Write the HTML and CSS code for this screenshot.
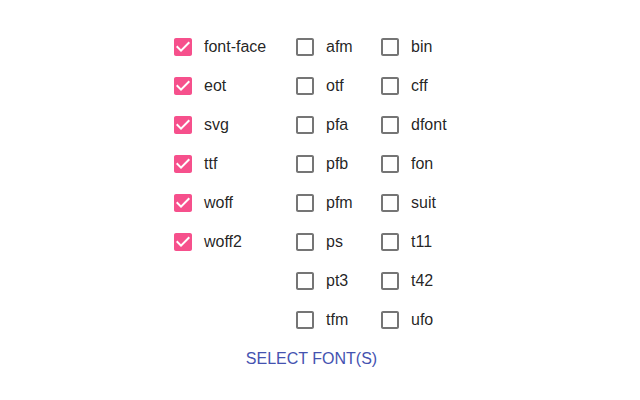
FILE: index.html
```html
<!DOCTYPE html>
<html>
<head>
<meta charset="utf-8">
<link rel="stylesheet" href="styles.css">
</head>
<body>
<div class="page">
  <div class="group">
    <div class="col c1">
      <label class="item"><span class="cb on"><svg viewBox="0 0 24 24"><path d="M19 3H5c-1.11 0-2 .9-2 2v14c0 1.1.89 2 2 2h14c1.11 0 2-.9 2-2V5c0-1.1-.89-2-2-2zm-9 14l-5-5 1.41-1.41L10 14.17l7.59-7.59L19 8l-9 9z"/></svg></span><span class="lbl">font-face</span></label>
      <label class="item"><span class="cb on"><svg viewBox="0 0 24 24"><path d="M19 3H5c-1.11 0-2 .9-2 2v14c0 1.1.89 2 2 2h14c1.11 0 2-.9 2-2V5c0-1.1-.89-2-2-2zm-9 14l-5-5 1.41-1.41L10 14.17l7.59-7.59L19 8l-9 9z"/></svg></span><span class="lbl">eot</span></label>
      <label class="item"><span class="cb on"><svg viewBox="0 0 24 24"><path d="M19 3H5c-1.11 0-2 .9-2 2v14c0 1.1.89 2 2 2h14c1.11 0 2-.9 2-2V5c0-1.1-.89-2-2-2zm-9 14l-5-5 1.41-1.41L10 14.17l7.59-7.59L19 8l-9 9z"/></svg></span><span class="lbl">svg</span></label>
      <label class="item"><span class="cb on"><svg viewBox="0 0 24 24"><path d="M19 3H5c-1.11 0-2 .9-2 2v14c0 1.1.89 2 2 2h14c1.11 0 2-.9 2-2V5c0-1.1-.89-2-2-2zm-9 14l-5-5 1.41-1.41L10 14.17l7.59-7.59L19 8l-9 9z"/></svg></span><span class="lbl">ttf</span></label>
      <label class="item"><span class="cb on"><svg viewBox="0 0 24 24"><path d="M19 3H5c-1.11 0-2 .9-2 2v14c0 1.1.89 2 2 2h14c1.11 0 2-.9 2-2V5c0-1.1-.89-2-2-2zm-9 14l-5-5 1.41-1.41L10 14.17l7.59-7.59L19 8l-9 9z"/></svg></span><span class="lbl">woff</span></label>
      <label class="item"><span class="cb on"><svg viewBox="0 0 24 24"><path d="M19 3H5c-1.11 0-2 .9-2 2v14c0 1.1.89 2 2 2h14c1.11 0 2-.9 2-2V5c0-1.1-.89-2-2-2zm-9 14l-5-5 1.41-1.41L10 14.17l7.59-7.59L19 8l-9 9z"/></svg></span><span class="lbl">woff2</span></label>
    </div>
    <div class="col c2">
      <label class="item"><span class="cb"><svg viewBox="0 0 24 24"><path d="M19 5v14H5V5h14m0-2H5c-1.1 0-2 .9-2 2v14c0 1.1.9 2 2 2h14c1.1 0 2-.9 2-2V5c0-1.1-.9-2-2-2z"/></svg></span><span class="lbl">afm</span></label>
      <label class="item"><span class="cb"><svg viewBox="0 0 24 24"><path d="M19 5v14H5V5h14m0-2H5c-1.1 0-2 .9-2 2v14c0 1.1.9 2 2 2h14c1.1 0 2-.9 2-2V5c0-1.1-.9-2-2-2z"/></svg></span><span class="lbl">otf</span></label>
      <label class="item"><span class="cb"><svg viewBox="0 0 24 24"><path d="M19 5v14H5V5h14m0-2H5c-1.1 0-2 .9-2 2v14c0 1.1.9 2 2 2h14c1.1 0 2-.9 2-2V5c0-1.1-.9-2-2-2z"/></svg></span><span class="lbl">pfa</span></label>
      <label class="item"><span class="cb"><svg viewBox="0 0 24 24"><path d="M19 5v14H5V5h14m0-2H5c-1.1 0-2 .9-2 2v14c0 1.1.9 2 2 2h14c1.1 0 2-.9 2-2V5c0-1.1-.9-2-2-2z"/></svg></span><span class="lbl">pfb</span></label>
      <label class="item"><span class="cb"><svg viewBox="0 0 24 24"><path d="M19 5v14H5V5h14m0-2H5c-1.1 0-2 .9-2 2v14c0 1.1.9 2 2 2h14c1.1 0 2-.9 2-2V5c0-1.1-.9-2-2-2z"/></svg></span><span class="lbl">pfm</span></label>
      <label class="item"><span class="cb"><svg viewBox="0 0 24 24"><path d="M19 5v14H5V5h14m0-2H5c-1.1 0-2 .9-2 2v14c0 1.1.9 2 2 2h14c1.1 0 2-.9 2-2V5c0-1.1-.9-2-2-2z"/></svg></span><span class="lbl">ps</span></label>
      <label class="item"><span class="cb"><svg viewBox="0 0 24 24"><path d="M19 5v14H5V5h14m0-2H5c-1.1 0-2 .9-2 2v14c0 1.1.9 2 2 2h14c1.1 0 2-.9 2-2V5c0-1.1-.9-2-2-2z"/></svg></span><span class="lbl">pt3</span></label>
      <label class="item"><span class="cb"><svg viewBox="0 0 24 24"><path d="M19 5v14H5V5h14m0-2H5c-1.1 0-2 .9-2 2v14c0 1.1.9 2 2 2h14c1.1 0 2-.9 2-2V5c0-1.1-.9-2-2-2z"/></svg></span><span class="lbl">tfm</span></label>
    </div>
    <div class="col c3">
      <label class="item"><span class="cb"><svg viewBox="0 0 24 24"><path d="M19 5v14H5V5h14m0-2H5c-1.1 0-2 .9-2 2v14c0 1.1.9 2 2 2h14c1.1 0 2-.9 2-2V5c0-1.1-.9-2-2-2z"/></svg></span><span class="lbl">bin</span></label>
      <label class="item"><span class="cb"><svg viewBox="0 0 24 24"><path d="M19 5v14H5V5h14m0-2H5c-1.1 0-2 .9-2 2v14c0 1.1.9 2 2 2h14c1.1 0 2-.9 2-2V5c0-1.1-.9-2-2-2z"/></svg></span><span class="lbl">cff</span></label>
      <label class="item"><span class="cb"><svg viewBox="0 0 24 24"><path d="M19 5v14H5V5h14m0-2H5c-1.1 0-2 .9-2 2v14c0 1.1.9 2 2 2h14c1.1 0 2-.9 2-2V5c0-1.1-.9-2-2-2z"/></svg></span><span class="lbl">dfont</span></label>
      <label class="item"><span class="cb"><svg viewBox="0 0 24 24"><path d="M19 5v14H5V5h14m0-2H5c-1.1 0-2 .9-2 2v14c0 1.1.9 2 2 2h14c1.1 0 2-.9 2-2V5c0-1.1-.9-2-2-2z"/></svg></span><span class="lbl">fon</span></label>
      <label class="item"><span class="cb"><svg viewBox="0 0 24 24"><path d="M19 5v14H5V5h14m0-2H5c-1.1 0-2 .9-2 2v14c0 1.1.9 2 2 2h14c1.1 0 2-.9 2-2V5c0-1.1-.9-2-2-2z"/></svg></span><span class="lbl">suit</span></label>
      <label class="item"><span class="cb"><svg viewBox="0 0 24 24"><path d="M19 5v14H5V5h14m0-2H5c-1.1 0-2 .9-2 2v14c0 1.1.9 2 2 2h14c1.1 0 2-.9 2-2V5c0-1.1-.9-2-2-2z"/></svg></span><span class="lbl">t11</span></label>
      <label class="item"><span class="cb"><svg viewBox="0 0 24 24"><path d="M19 5v14H5V5h14m0-2H5c-1.1 0-2 .9-2 2v14c0 1.1.9 2 2 2h14c1.1 0 2-.9 2-2V5c0-1.1-.9-2-2-2z"/></svg></span><span class="lbl">t42</span></label>
      <label class="item"><span class="cb"><svg viewBox="0 0 24 24"><path d="M19 5v14H5V5h14m0-2H5c-1.1 0-2 .9-2 2v14c0 1.1.9 2 2 2h14c1.1 0 2-.9 2-2V5c0-1.1-.9-2-2-2z"/></svg></span><span class="lbl">ufo</span></label>
    </div>
  </div>
  <div class="actions">
    <button class="btn">SELECT FONT(S)</button>
  </div>
</div>
</body>
</html>
```
FILE: styles.css
```css
html, body {
  margin: 0;
  padding: 0;
  background: #ffffff;
}
body {
  font-family: "Liberation Sans", Arial, sans-serif;
  font-size: 16px;
  color: rgba(0, 0, 0, 0.87);
}
.page {
  width: 640px;
  height: 400px;
  padding-top: 27px;
  box-sizing: border-box;
}
.group {
  display: grid;
  grid-template-columns: 122px 85px 109px;
  justify-content: center;
}
.col {
  display: flex;
  flex-direction: column;
}
.item {
  display: flex;
  align-items: center;
  height: 39px;
  cursor: pointer;
}
.cb {
  display: flex;
  align-items: center;
  justify-content: center;
  width: 42px;
  height: 39px;
  flex: none;
}
.cb svg {
  width: 24px;
  height: 24px;
  fill: rgba(0, 0, 0, 0.54);
}
.cb.on svg {
  fill: #f6508c;
}
.lbl {
  line-height: 20px;
}
.actions {
  display: flex;
  justify-content: center;
  padding-right: 17px;
  padding-top: 1px;
}
.btn {
  font-family: "Liberation Sans", Arial, sans-serif;
  font-size: 16px;
  color: #4452b0;
  background: transparent;
  border: none;
  height: 38px;
  padding: 0 8px;
  cursor: pointer;
}
```
